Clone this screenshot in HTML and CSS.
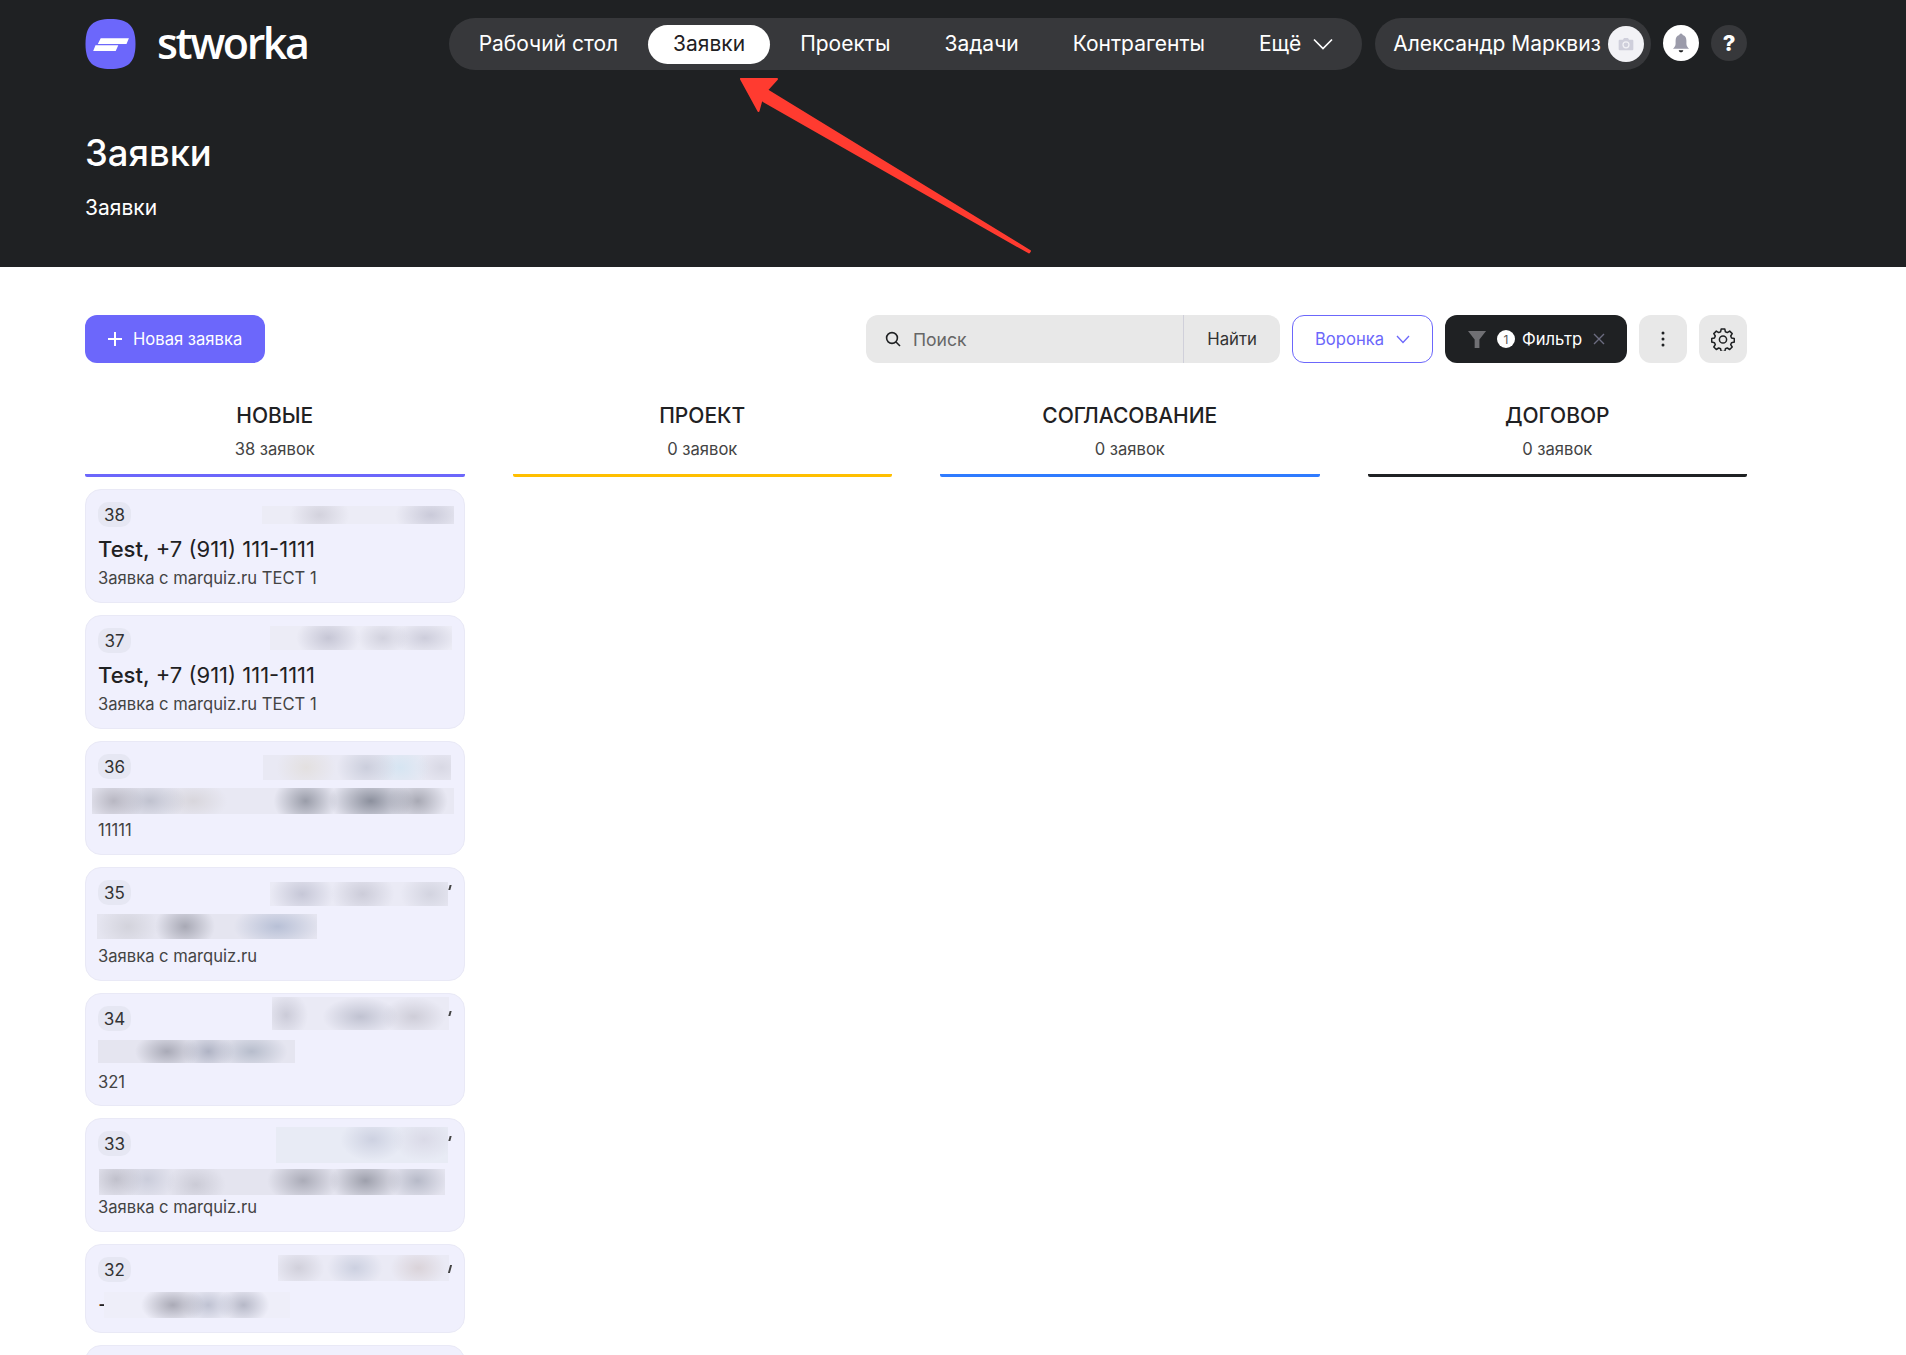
FILE: index.html
```html
<!DOCTYPE html>
<html lang="ru">
<head>
<meta charset="utf-8">
<title>Заявки</title>
<link rel="stylesheet" href="styles.css">
</head>
<body>
<header class="hero">
  <div class="topbar">
    <a class="brand">
      <svg class="brand-mark" viewBox="0 0 50 50"><path d="M25 0C42 0 50 6 50 25S42 50 25 50 0 44 0 25 8 0 25 0Z" fill="#6C67FB"/><path d="M15.2 19.3H43.4L41 25H12.3ZM10 26.3H32.8L30.2 32H7.7Z" fill="#fff"/></svg>
      <span class="brand-name">stworka</span>
    </a>
    <nav class="nav">
      <a class="nav-item">Рабочий стол</a>
      <a class="nav-item active">Заявки</a>
      <a class="nav-item">Проекты</a>
      <a class="nav-item">Задачи</a>
      <a class="nav-item">Контрагенты</a>
      <a class="nav-item more">Ещё
        <svg class="nav-chev" viewBox="0 0 20 12"><path d="M1 1.5 10 10.500 19 1.500" fill="none" stroke="#fff" stroke-width="1.700"/></svg>
      </a>
    </nav>
    <div class="user">
      <span class="user-name">Александр Марквиз</span>
      <span class="avatar">
        <svg viewBox="0 0 24 20" class="avatar-icon"><path d="M2.500 3.500H7.500L9 1H15L16.500 3.500H21.500A1.500 1.500 0 0 1 23 5V18A1.500 1.500 0 0 1 21.500 19.500H2.500A1.500 1.500 0 0 1 1 18V5A1.500 1.500 0 0 1 2.500 3.500Z" fill="#CFCFDB"/><circle cx="12" cy="11.300" r="4.500" fill="none" stroke="#F2F2F6" stroke-width="1.800"/></svg>
      </span>
    </div>
    <a class="round-btn bell">
      <svg viewBox="0 0 20 24"><path d="M10 1.500C11.200 1.500 11.800 2.300 11.800 3.200 14.800 4 16 6.500 16 9.500V13C16 15.500 17.800 17 19 18.500H1C2.200 17 4 15.500 4 13V9.500C4 6.500 5.200 4 8.200 3.200 8.200 2.300 8.800 1.500 10 1.500Z" fill="#9B9BAA"/><path d="M7.500 20H12.500C12.300 21.500 11.300 22.300 10 22.300S7.700 21.500 7.500 20Z" fill="#1F2123"/></svg>
    </a>
    <a class="round-btn help">?</a>
  </div>
  <h1 class="page-title">Заявки</h1>
  <div class="crumb">Заявки</div>
  <svg class="annot" viewBox="0 0 300 180"><path d="M1 1 37 1 27 12 290 173 289 174.500 21.500 22 18.500 33Z" fill="#FF3B30" stroke="#FF3B30" stroke-width="2" stroke-linejoin="round"/></svg>
</header>

<main class="board">
  <div class="toolbar">
    <a class="btn-new">
      <svg class="plus" viewBox="0 0 14 14"><path d="M7 0V14M0 7H14" stroke="#fff" stroke-width="2"/></svg>
      Новая заявка
    </a>
    <div class="tools">
      <div class="search">
        <svg class="search-icon" viewBox="0 0 16 16"><circle cx="7" cy="7" r="5.400" fill="none" stroke="#1F2123" stroke-width="1.600"/><path d="M11 11 15 15" stroke="#1F2123" stroke-width="1.600"/></svg>
        <span class="search-ph">Поиск</span>
        <span class="search-go">Найти</span>
      </div>
      <a class="funnel">Воронка
        <svg class="funnel-chev" viewBox="0 0 14 9"><path d="M1 1 7 7.500 13 1" fill="none" stroke="#6C67FB" stroke-width="1.300"/></svg>
      </a>
      <a class="filter">
        <svg class="filter-icon" viewBox="0 0 20 20"><path d="M0 1H19L12 10V19H7V10Z" fill="#707074"/></svg>
        <span class="filter-count">1</span>
        <span>Фильтр</span>
        <svg class="filter-x" viewBox="0 0 12 12"><path d="M1 1 11 11M11 1 1 11" stroke="#6C6C80" stroke-width="1.400"/></svg>
      </a>
      <a class="tool-btn">
        <svg class="dots" viewBox="0 0 4 16"><circle cx="2" cy="2" r="1.500"/><circle cx="2" cy="8" r="1.500"/><circle cx="2" cy="14" r="1.500"/></svg>
      </a>
      <a class="tool-btn">
        <svg class="gear" viewBox="0 0 24 24"><path d="M10.200 2h3.600l.6 2.800 1.900.8 2.400-1.500 2.500 2.500-1.500 2.400.8 1.900 2.800.6v3.600l-2.800.6-.8 1.900 1.500 2.400-2.500 2.500-2.400-1.500-1.900.8-.6 2.800h-3.600l-.6-2.800-1.900-.8-2.400 1.500-2.500-2.500 1.500-2.400-.8-1.900-2.800-.6v-3.600l2.800-.6.8-1.900-1.500-2.400 2.500-2.500 2.400 1.500 1.900-.8z" fill="none" stroke="#1F2123" stroke-width="1.500" stroke-linejoin="round"/><circle cx="12" cy="12.500" r="3.600" fill="none" stroke="#1F2123" stroke-width="1.500"/></svg>
      </a>
    </div>
  </div>

  <div class="columns">
    <section class="col col-new">
      <div class="col-head"><div class="col-title">НОВЫЕ</div><div class="col-count">38 заявок</div></div>
      <div class="cards">
        <article class="card">
          <div class="mask m38"></div>
          <span class="badge">38</span>
          <div class="card-title"><b>Test,</b> +7 (911) 111-1111</div>
          <div class="card-sub">Заявка с marquiz.ru ТЕСТ 1</div>
        </article>
        <article class="card">
          <div class="mask m37"></div>
          <span class="badge">37</span>
          <div class="card-title"><b>Test,</b> +7 (911) 111-1111</div>
          <div class="card-sub">Заявка с marquiz.ru ТЕСТ 1</div>
        </article>
        <article class="card">
          <div class="mask m36"></div>
          <div class="mask t36"></div>
          <span class="badge">36</span>
          <div class="card-title"></div>
          <div class="card-sub">11111</div>
        </article>
        <article class="card">
          <div class="mask m35"></div>
          <div class="mask t35"></div>
          <i class="tick"></i>
          <span class="badge">35</span>
          <div class="card-title"></div>
          <div class="card-sub">Заявка с marquiz.ru</div>
        </article>
        <article class="card card-34">
          <div class="mask m34"></div>
          <div class="mask t34"></div>
          <i class="tick"></i>
          <span class="badge">34</span>
          <div class="card-title"></div>
          <div class="card-sub">321</div>
        </article>
        <article class="card">
          <div class="mask m33"></div>
          <div class="mask t33"></div>
          <i class="tick"></i>
          <span class="badge">33</span>
          <div class="card-title"></div>
          <div class="card-sub">Заявка с marquiz.ru</div>
        </article>
        <article class="card card-short">
          <div class="mask m32"></div>
          <div class="mask t32"></div>
          <i class="tick"></i>
          <span class="badge">32</span>
          <div class="card-title">-</div>
        </article>
        <article class="card"></article>
      </div>
    </section>
    <section class="col col-project">
      <div class="col-head"><div class="col-title">ПРОЕКТ</div><div class="col-count">0 заявок</div></div>
    </section>
    <section class="col col-agree">
      <div class="col-head"><div class="col-title">СОГЛАСОВАНИЕ</div><div class="col-count">0 заявок</div></div>
    </section>
    <section class="col col-contract">
      <div class="col-head"><div class="col-title">ДОГОВОР</div><div class="col-count">0 заявок</div></div>
    </section>
  </div>
</main>
</body>
</html>
```

FILE: styles.css
```css
* { box-sizing: border-box; }
html, body { margin: 0; height: 100%; overflow: hidden; }
body { background: #fff; color: #1F2123; font-family: Inter, "Liberation Sans", sans-serif; }

.hero { position: relative; height: 267px; background: #1F2123; color: #fff; padding: 18px 159px 0 85px; }
.topbar { display: flex; align-items: center; height: 52px; }
.brand { display: flex; align-items: center; gap: 21px; margin-right: auto; }
.brand-mark { width: 51px; height: 50px; display: block; }
.brand-name { font-family: "Open Sans", sans-serif; font-size: 43px; font-weight: 600; letter-spacing: -2.400px; line-height: 48px; padding-bottom: 2px; }

.nav { display: flex; align-items: center; gap: 6px; height: 52px; padding: 0 29px 0 6px; background: #37383B; border-radius: 26px; font-size: 21px; }
.nav-item { display: flex; align-items: center; height: 39px; padding: 0 24px 1px; border-radius: 20px; white-space: nowrap; }
.nav-item.active { background: #fff; color: #1F2123; padding: 0 25px 1px; }
.nav-item.more { padding-right: 0; gap: 12px; }
.nav-chev { width: 20px; height: 12px; }

.user { display: flex; align-items: center; gap: 7px; height: 52px; margin-left: 13px; padding: 0 7px 0 18px; background: #37383B; border-radius: 26px; font-size: 21px; }
.user-name { white-space: nowrap; padding-bottom: 1px; }
.avatar { display: flex; align-items: center; justify-content: center; width: 36px; height: 36px; border-radius: 50%; background: #F2F2F6; }
.avatar-icon { width: 16px; height: 14px; }
.round-btn { display: flex; align-items: center; justify-content: center; width: 36px; height: 36px; margin: 0 0 2px 12px; border-radius: 50%; }
.bell { background: #fff; }
.bell svg { width: 18px; height: 22px; }
.help { background: #37383B; color: #fff; font-size: 22px; font-weight: 800; }

.page-title { margin: 61px 0 0; font-size: 36.400px; line-height: 44px; font-weight: 500; }
.crumb { margin-top: 21px; font-size: 21px; line-height: 24px; }
.annot { position: absolute; left: 740px; top: 78px; width: 300px; height: 180px; overflow: visible; }

.board { padding: 48px 159px 0 85px; }
.toolbar { display: flex; justify-content: space-between; height: 48px; }
.btn-new { display: flex; align-items: center; gap: 11px; width: 180px; padding-left: 23px; background: #6C67FB; color: #fff; border-radius: 12px; font-size: 16.600px; }
.plus { width: 14px; height: 14px; }
.tools { display: flex; gap: 12px; }
.search { display: flex; align-items: center; width: 414px; background: #E8E8E8; border-radius: 12px; overflow: hidden; }
.search-icon { width: 16px; height: 16px; margin-left: 19px; }
.search-ph { flex: 1; margin-left: 12px; font-size: 17.600px; color: #666; }
.search-go { display: flex; align-items: center; height: 100%; padding: 0 23px; border-left: 1px solid #D0D0DA; font-size: 16.800px; color: #333; }
.funnel { display: flex; align-items: center; gap: 12px; width: 141px; padding-left: 22px; border: 1px solid #6C67FB; border-radius: 12px; color: #6C67FB; font-size: 16.600px; }
.funnel-chev { width: 14px; height: 9px; }
.filter { display: flex; align-items: center; width: 182px; padding-left: 23px; background: #1F2123; color: #fff; border-radius: 12px; font-size: 16.600px; gap: 7px; }
.filter-icon { width: 19px; height: 19px; margin-right: 3px; }
.filter-count { display: flex; align-items: center; justify-content: center; width: 18px; height: 18px; border-radius: 50%; background: #fff; color: #555; font-size: 12px; }
.filter-x { width: 12px; height: 12px; margin-left: 4px; }
.tool-btn { display: flex; align-items: center; justify-content: center; width: 48px; height: 48px; background: #E8E8E8; border-radius: 12px; }
.dots { width: 4px; height: 16px; fill: #1F2123; }
.gear { width: 24px; height: 24px; }

.columns { display: grid; grid-template-columns: repeat(4, 1fr); gap: 48px; margin-top: 39px; }
.col-head { height: 75px; padding-top: 2px; border-bottom: 3px solid #000; border-radius: 0 0 2px 2px; text-align: center; }
.col-new .col-head { border-color: #6C67FB; }
.col-project .col-head { border-color: #FFBF00; }
.col-agree .col-head { border-color: #2F7BFF; }
.col-contract .col-head { border-color: #1F2123; }
.col-title { font-size: 21px; line-height: 24px; font-weight: 500; }
.col-count { margin-top: 11px; font-size: 16.600px; line-height: 20px; color: #444; }

.cards { display: flex; flex-direction: column; gap: 12px; margin-top: 12px; }
.card { position: relative; height: 114px; padding: 12px; background: #F0F0FD; border: 1px solid #E9E9F6; border-radius: 16px; }
.card-34 { height: 113px; }
.card-short { height: 89px; }
.badge { display: flex; align-items: center; justify-content: center; width: 33px; height: 25px; background: #E6E7F3; border-radius: 10px; font-size: 17px; color: #333; }
.card-title { height: 28px; margin-top: 8px; font-size: 22px; line-height: 28px; white-space: nowrap; }
.card-title b { font-weight: 500; }
.card-sub { margin-top: 5px; font-size: 16.600px; line-height: 20px; color: #444; }

.tick { position: absolute; right: 13px; top: 17px; width: 2px; height: 5px; background: #444; transform: skewX(-15deg); }
.card-short .tick { top: 20px; height: 8px; }

.mask { position: absolute; background-color: #E9E9F4; }
.m38 { left: 176px; top: 16px; width: 192px; height: 18px;
  background: radial-gradient(ellipse 30px 22px at 30% 50%, #D3D2DD, transparent), radial-gradient(ellipse 36px 22px at 88% 50%, #CACAD9, transparent), #ECECF6; }
.m37 { left: 184px; top: 10px; width: 182px; height: 24px;
  background: radial-gradient(ellipse 32px 22px at 32% 50%, #C6C6D5, transparent), radial-gradient(ellipse 26px 18px at 62% 50%, #D2D2DE, transparent), radial-gradient(ellipse 32px 18px at 85% 50%, #CDCDDB, transparent), #ECECF6; }
.m36 { left: 177px; top: 13px; width: 188px; height: 25px;
  background: radial-gradient(ellipse 30px 24px at 23% 50%, #E3E0E0, transparent), radial-gradient(ellipse 30px 24px at 55% 50%, #CBCEDC, transparent), radial-gradient(ellipse 30px 24px at 73% 50%, #D6E5F2, transparent), radial-gradient(ellipse 26px 20px at 95% 50%, #D8D8E4, transparent), #E9E9F4; }
.t36 { left: 6px; top: 46px; width: 362px; height: 26px;
  background: radial-gradient(ellipse 30px 24px at 6% 50%, #B8B7C2, transparent), radial-gradient(ellipse 36px 22px at 16% 50%, #C0C2CF, transparent), radial-gradient(ellipse 34px 20px at 28% 50%, #D8D6DC, transparent), radial-gradient(ellipse 32px 26px at 59% 50%, #9A9DA9, transparent), radial-gradient(ellipse 42px 26px at 77% 50%, #8C909D, transparent), radial-gradient(ellipse 30px 24px at 90% 50%, #A8A9B4, transparent), #E8E8F3; }
.m35 { left: 184px; top: 14px; width: 178px; height: 24px;
  background: radial-gradient(ellipse 32px 24px at 18% 50%, #C6C7D7, transparent), radial-gradient(ellipse 32px 24px at 52% 50%, #CCCCD9, transparent), radial-gradient(ellipse 30px 24px at 90% 50%, #D3D4E0, transparent), #EAEAF5; }
.t35 { left: 11px; top: 46px; width: 220px; height: 25px;
  background: radial-gradient(ellipse 30px 24px at 14% 50%, #D3D3DC, transparent), radial-gradient(ellipse 30px 24px at 40% 50%, #A8A9B5, transparent), radial-gradient(ellipse 44px 22px at 82% 50%, #B8C0D6, transparent), #E5E5F0; }
.m34 { left: 186px; top: 3px; width: 177px; height: 33px;
  background: radial-gradient(ellipse 22px 24px at 8% 55%, #CBCBD8, transparent), radial-gradient(ellipse 38px 20px at 50% 60%, #C0C2D1, transparent), radial-gradient(ellipse 32px 20px at 80% 60%, #CECDD8, transparent), #EAEAF5; }
.t34 { left: 12px; top: 46px; width: 197px; height: 23px;
  background: radial-gradient(ellipse 32px 20px at 35% 50%, #A9AAB7, transparent), radial-gradient(ellipse 26px 20px at 56% 50%, #AFB3C4, transparent), radial-gradient(ellipse 36px 20px at 78% 50%, #B7BDCC, transparent), #E5E5F0; }
.m33 { left: 190px; top: 8px; width: 172px; height: 36px;
  background: radial-gradient(ellipse 32px 22px at 56% 35%, #CDD1E1, transparent), radial-gradient(ellipse 32px 22px at 86% 35%, #DADAE7, transparent), #E8EBF5; }
.t33 { left: 13px; top: 50px; width: 346px; height: 26px;
  background: radial-gradient(ellipse 26px 22px at 5% 40%, #C0C0CB, transparent), radial-gradient(ellipse 28px 22px at 14% 40%, #CBCDDB, transparent), radial-gradient(ellipse 30px 22px at 28% 60%, #CBCBD6, transparent), radial-gradient(ellipse 36px 24px at 59% 45%, #ABACB8, transparent), radial-gradient(ellipse 36px 24px at 77% 45%, #9EA0AC, transparent), radial-gradient(ellipse 30px 22px at 92% 45%, #B7BAC8, transparent), #E4E4EF; }
.m32 { left: 192px; top: 10px; width: 171px; height: 26px;
  background: radial-gradient(ellipse 26px 20px at 12% 50%, #D1D0DB, transparent), radial-gradient(ellipse 28px 20px at 45% 50%, #CCD0E0, transparent), radial-gradient(ellipse 28px 20px at 82% 50%, #DAD3D9, transparent), #EAEAF5; }
.t32 { left: 18px; top: 47px; width: 186px; height: 26px;
  background: radial-gradient(ellipse 32px 20px at 37% 50%, #AAAAB6, transparent), radial-gradient(ellipse 26px 20px at 56% 50%, #BFC2D2, transparent), radial-gradient(ellipse 26px 20px at 75% 50%, #B6B8C7, transparent), #EEEEF9; }
```
